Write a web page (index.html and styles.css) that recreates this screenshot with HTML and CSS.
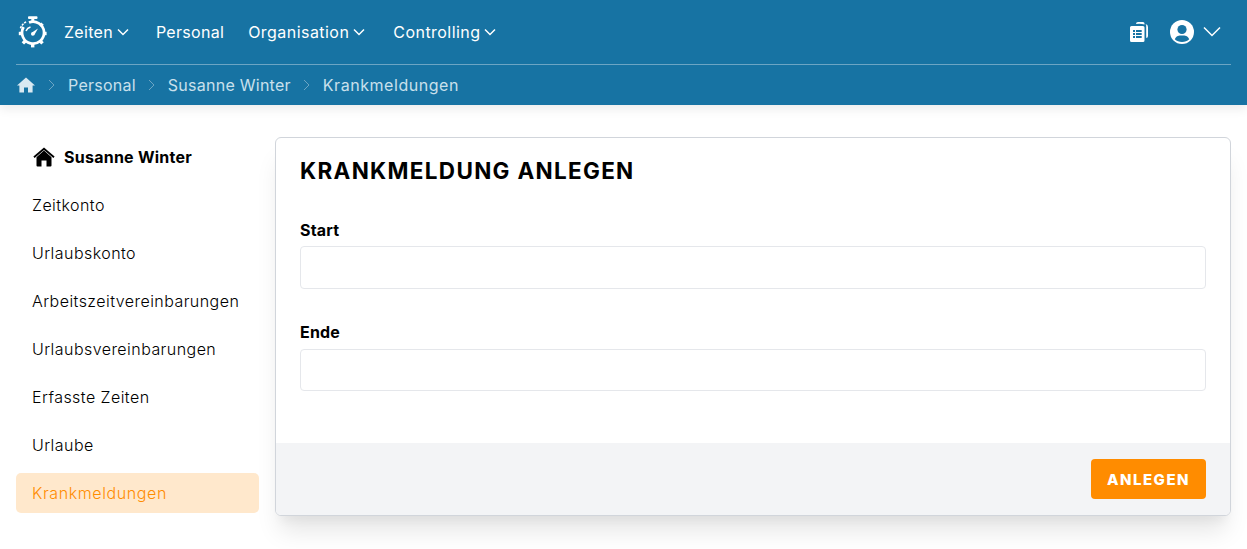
FILE: index.html
```html
<!DOCTYPE html>
<html lang="de">
<head>
<meta charset="utf-8">
<title>Krankmeldung anlegen</title>
<link rel="stylesheet" href="styles.css">
</head>
<body>
<header class="header">
  <div class="topbar">
    <nav class="nav">
      <svg class="logo" viewBox="0 0 30 32" aria-hidden="true">
        <rect x="10" y="0.3" width="9.5" height="2.8" rx="1" fill="#fff"/>
        <rect x="13.3" y="3" width="3" height="3.5" fill="#fff"/>
        <path d="M5.6 11 A11 11 0 1 0 11 6.4" fill="none" stroke="#fff" stroke-width="2.7"/>
        <path d="M2.4 12.2 A13.2 13.2 0 0 1 8.4 5.7" fill="none" stroke="#fff" stroke-width="1.5" stroke-dasharray="2.2 1"/>
        <g fill="#fff">
          <rect x="13" y="3.6" width="3.4" height="3.4" transform="rotate(45 14.7 17.5)"/>
          <rect x="13" y="3.6" width="3.4" height="3.4" transform="rotate(90 14.7 17.5)"/>
          <rect x="13" y="3.6" width="3.4" height="3.4" transform="rotate(135 14.7 17.5)"/>
          <rect x="13" y="3.6" width="3.4" height="3.4" transform="rotate(180 14.7 17.5)"/>
          <rect x="13" y="3.6" width="3.4" height="3.4" transform="rotate(225 14.7 17.5)"/>
          <rect x="13" y="3.6" width="3.4" height="3.4" transform="rotate(270 14.7 17.5)"/>
        </g>
        <path d="M8 15 A7 7 0 0 1 12.5 11" fill="none" stroke="#fff" stroke-width="1.5"/>
        <path d="M13.2 17 L20 12.5 L16 19.6 Z" fill="#fff"/>
        <circle cx="14.7" cy="18" r="1.7" fill="#fff"/>
      </svg>
      <a class="nav-link nav-zeiten">Zeiten <svg class="chev" viewBox="0 0 12 8"><path d="M1 1.5 L6 6.5 L11 1.5"/></svg></a>
      <a class="nav-link nav-plain">Personal</a>
      <a class="nav-link has-menu">Organisation <svg class="chev" viewBox="0 0 12 8"><path d="M1 1.5 L6 6.5 L11 1.5"/></svg></a>
      <a class="nav-link has-menu">Controlling <svg class="chev" viewBox="0 0 12 8"><path d="M1 1.5 L6 6.5 L11 1.5"/></svg></a>
    </nav>
    <div class="tools">
      <svg class="clip" viewBox="0 0 20 22" aria-hidden="true">
        <path d="M7 3 Q7 1 9 1 L14 1 Q15.5 1 15.5 2.5 L15.5 3.5 Q12 2.5 7 3 Z" fill="#fff"/>
        <path d="M16.5 3 Q19 3.5 19 6 L19 15 Q19 16.8 17.2 17 L17.2 5 Q17.2 3.8 16.5 3 Z" fill="#fff"/>
        <path fill-rule="evenodd" fill="#fff" d="M2.5 5 L14 5 Q15.5 5 15.5 6.5 L15.5 19.5 Q15.5 21 14 21 L2.5 21 Q1 21 1 19.5 L1 6.5 Q1 5 2.5 5 Z M4 9 L4 11 L6 11 L6 9 Z M7 9 L7 11 L12.7 11 L12.7 9 Z M4 12 L4 14 L6 14 L6 12 Z M7 12 L7 14 L12.7 14 L12.7 12 Z M4 15 L4 17 L6 17 L6 15 Z M7 15 L7 17 L12.7 17 L12.7 15 Z"/>
      </svg>
      <svg class="user" viewBox="0 0 24 24" aria-hidden="true">
        <circle cx="12" cy="12" r="12" fill="#fff"/>
        <circle cx="12" cy="9.5" r="4.6" fill="#1773a3"/>
        <path d="M4.8 19.2 C6 15.8 9 15.4 12 15.4 C15 15.4 18 15.8 19.2 19.2 C17.4 21 14.8 22 12 22 C9.2 22 6.6 21 4.8 19.2 Z" fill="#1773a3"/>
      </svg>
      <svg class="chev-big" viewBox="0 0 18 11"><path d="M1 1.5 L9 9.5 L17 1.5"/></svg>
    </div>
  </div>
  <div class="crumbs">
    <svg class="crumb-home" viewBox="0 0 18 16" aria-hidden="true"><path d="M9 0.5 L18 8.6 L15.6 8.6 L15.6 15.5 L11 15.5 L11 10.5 L7 10.5 L7 15.5 L2.4 15.5 L2.4 8.6 L0 8.6 Z"/></svg>
    <svg class="crumb-sep" viewBox="0 0 7 12"><path d="M1 1 L6 6 L1 11"/></svg>
    <a class="crumb">Personal</a>
    <svg class="crumb-sep" viewBox="0 0 7 12"><path d="M1 1 L6 6 L1 11"/></svg>
    <a class="crumb">Susanne Winter</a>
    <svg class="crumb-sep" viewBox="0 0 7 12"><path d="M1 1 L6 6 L1 11"/></svg>
    <a class="crumb crumb-current">Krankmeldungen</a>
  </div>
</header>
<main class="main">
  <aside class="side">
    <div class="side-head">
      <svg class="side-home" viewBox="0 0 22 20" aria-hidden="true">
        <path d="M11 3.6 L18.5 10.2 L18.5 18.5 Q18.5 19.5 17.5 19.5 L13.5 19.5 L13.5 13.5 L8.5 13.5 L8.5 19.5 L4.5 19.5 Q3.5 19.5 3.5 18.5 L3.5 10.2 Z"/>
        <path d="M11 0.4 L21.6 9.6 L20.4 11 L11 2.9 L1.6 11 L0.4 9.6 Z"/>
      </svg>
      <span>Susanne Winter</span>
    </div>
    <a class="side-item">Zeitkonto</a>
    <a class="side-item">Urlaubskonto</a>
    <a class="side-item">Arbeitszeitvereinbarungen</a>
    <a class="side-item">Urlaubsvereinbarungen</a>
    <a class="side-item">Erfasste Zeiten</a>
    <a class="side-item">Urlaube</a>
    <a class="side-item active">Krankmeldungen</a>
  </aside>
  <section class="card">
    <div class="card-body">
      <h1 class="title">KRANKMELDUNG ANLEGEN</h1>
      <label class="field-label first" for="start">Start</label>
      <input class="field" id="start" type="text">
      <label class="field-label second" for="ende">Ende</label>
      <input class="field field-end" id="ende" type="text">
    </div>
    <div class="card-foot">
      <button class="btn" type="button">ANLEGEN</button>
    </div>
  </section>
</main>
</body>
</html>
```
FILE: styles.css
```css
* { box-sizing: border-box; }
html, body { margin: 0; height: 100%; overflow: hidden; }
body {
  background: #fff;
  color: #000;
  font-family: "Inter", "Liberation Sans", sans-serif;
  font-size: 16px;
}
.header {
  height: 105px;
  background: #1773a3;
  padding: 0 16px;
  box-shadow: 0 4px 10px rgba(0, 0, 0, 0.08);
}
.topbar {
  height: 65px;
  display: flex;
  align-items: center;
  justify-content: space-between;
  border-bottom: 1px solid #6ca5c4;
}
.nav { display: flex; align-items: center; }
.logo { width: 30px; height: 32px; margin-right: 16px; margin-left: 2px; }
.nav-link {
  color: #fff;
  font-size: 16px;
  font-weight: 400;
  display: flex;
  align-items: center;
  gap: 4px;
  letter-spacing: 0.45px;
}
.nav-zeiten { letter-spacing: 0.3px; margin-right: 27px; }
.nav-plain { letter-spacing: 0.3px; margin-right: 24px; }
.has-menu { margin-right: 28px; }
.chev { width: 12px; height: 8px; }
.chev path, .chev-big path { fill: none; stroke: #fff; stroke-width: 1.5; }
.tools { display: flex; align-items: center; margin-right: 10px; }
.clip { width: 20px; height: 22px; margin-right: 21px; }
.user { width: 24px; height: 24px; margin-right: 9px; }
.chev-big { width: 18px; height: 11px; margin-bottom: 2px; }
.crumbs {
  height: 40px;
  display: flex;
  align-items: center;
  color: #c9e0ec;
}
.crumb-home { width: 18px; height: 16px; margin-left: 1px; margin-right: 1px; fill: #d9e9f2; }
.crumb-sep { width: 7px; height: 12px; margin: 0 13px 0 12px; }
.crumb-sep path { fill: none; stroke: #6ca5c4; stroke-width: 1; }
.crumb { font-size: 16px; letter-spacing: 0.25px; }
.crumb-current { letter-spacing: 0.55px; }
.main {
  display: flex;
  gap: 16px;
  padding: 32px 16px 0;
  align-items: flex-start;
}
.side { width: 243px; flex: none; display: flex; flex-direction: column; gap: 8px; }
.side-head {
  height: 40px;
  display: flex;
  align-items: center;
  gap: 9px;
  padding-left: 17px;
  font-weight: 700;
  font-size: 16px;
  letter-spacing: 0.25px;
}
.side-home { width: 22px; height: 20px; fill: #000; }
.side-item {
  height: 40px;
  display: flex;
  align-items: center;
  padding-left: 16px;
  border-radius: 5px;
  font-size: 16px;
  font-weight: 350;
  letter-spacing: 0.45px;
}
.side-item.active { background: #ffe8cc; color: #ff8c00; letter-spacing: 0.6px; }
.card {
  flex: 1;
  height: 379px;
  border: 1px solid #d1d5db;
  border-radius: 6px;
  box-shadow: 0 20px 25px -5px rgba(0, 0, 0, 0.1), 0 10px 10px -5px rgba(0, 0, 0, 0.04);
  overflow: hidden;
  display: flex;
  flex-direction: column;
  background: #fff;
}
.card-body { flex: 1; padding: 17px 24px 0; }
.title {
  margin: 0;
  font-size: 22.5px;
  line-height: 32px;
  font-weight: 700;
  letter-spacing: 1.3px;
}
.field-label {
  display: block;
  font-weight: 700;
  font-size: 16px;
  line-height: 24px;
  margin-bottom: 4px;
  letter-spacing: 0.2px;
}
.field-label.first { margin-top: 31px; }
.field-label.second { margin-top: 31px; margin-bottom: 5px; }
.field {
  display: block;
  width: 100%;
  height: 43px;
  border: 1px solid #e5e7eb;
  border-radius: 4px;
  background: #fff;
}
.field-end { height: 42px; }
.card-foot {
  height: 72px;
  background: #f3f4f6;
  display: flex;
  justify-content: flex-end;
  align-items: center;
  padding: 0 24px;
}
.btn {
  width: 115px;
  height: 40px;
  border: 0;
  border-radius: 4px;
  background: #ff8c00;
  color: #fff;
  font-family: inherit;
  font-size: 15px;
  font-weight: 800;
  letter-spacing: 1.5px;
}
```
